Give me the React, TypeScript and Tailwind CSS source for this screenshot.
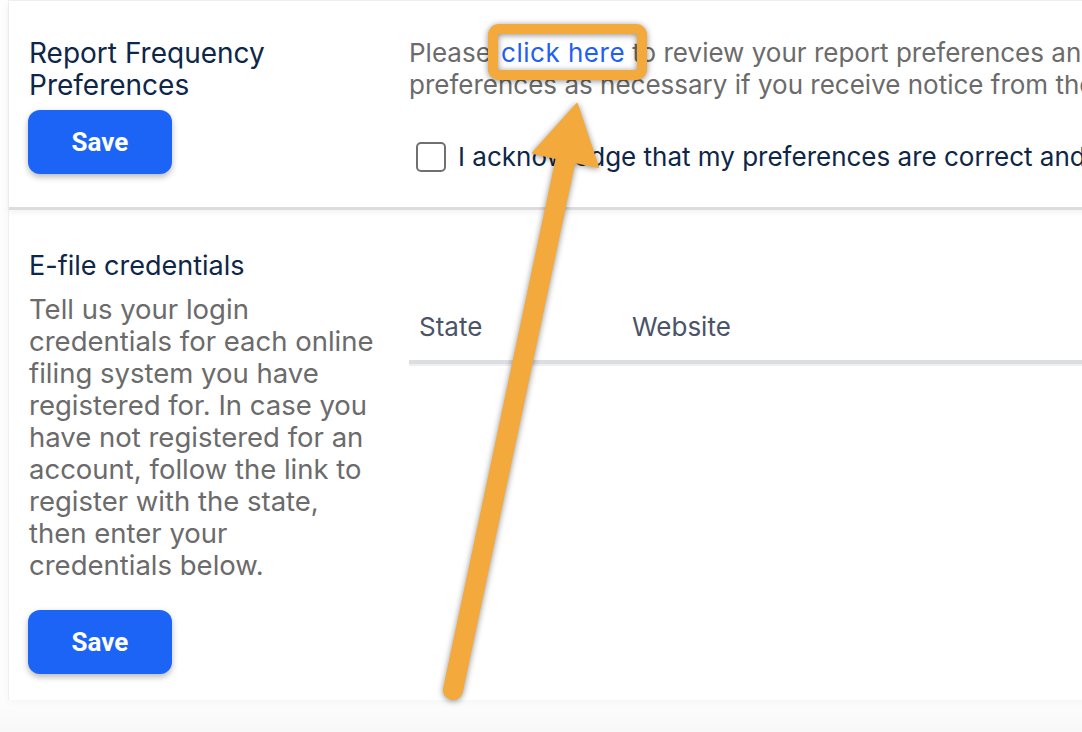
import React from "react";

function SaveButton() {
  return (
    <button className="-ml-px flex h-[64px] w-[144px] items-center justify-center rounded-[12px] bg-[#1c64f6] font-['Roboto'] text-[26px] font-bold text-white shadow-[0_3px_6px_rgba(0,0,0,0.28)]">
      Save
    </button>
  );
}

const descLines = [
  "Tell us your login",
  "credentials for each online",
  "filing system you have",
  "registered for. In case you",
  "have not registered for an",
  "account, follow the link to",
  "register with the state,",
  "then enter your",
  "credentials below.",
];

export default function App() {
  return (
    <div className="relative h-[732px] w-[1082px] overflow-hidden bg-[linear-gradient(to_bottom,#fdfdfd_0px,#fdfdfd_700px,#f8f8f8_732px)] font-['Inter',sans-serif]">
      <div className="ml-2 w-[1200px] border-l border-t border-[#f0f0f0] bg-white shadow-[0_3px_8px_rgba(0,0,0,0.03)]">
        {/* Report frequency */}
        <section className="flex border-b-[3px] border-[#dcdcdc] pb-[33px] pt-[36px] shadow-[0_3px_6px_rgba(0,0,0,0.05)]">
          <div className="w-[400px] shrink-0 pl-[20px]">
            <h2 className="w-[350px] text-[28px] leading-[32px] text-[#0e2647]">
              Report Frequency Preferences
            </h2>
            <div className="mt-[9px]">
              <SaveButton />
            </div>
          </div>
          <div className="flex-1">
            <p className="whitespace-nowrap text-[26px] leading-[32px] text-[#6b6b6b]">
              Please <a className="ml-[3px] tracking-[0.5px] text-[#1f5ff5]">click here</a> to review your report preferences and update
              <br />
              preferences as necessary if you receive notice from the state.
            </p>
            <label className="ml-[7px] mt-[40px] flex items-center gap-[12px] whitespace-nowrap">
              <span className="h-[30px] w-[30px] shrink-0 rounded-[5px] border-2 border-[#707070] bg-white" />
              <span className="text-[26px] leading-[32px] text-[#0e2647]">
                I acknowledge that my preferences are correct and up to date
              </span>
            </label>
          </div>
        </section>

        {/* E-file credentials */}
        <section className="flex pb-[26px]">
          <div className="w-[400px] shrink-0 pl-[20px] pt-[40px]">
            <h2 className="text-[27px] leading-[32px] text-[#0e2647]">E-file credentials</h2>
            <p className="mt-[11px] whitespace-nowrap text-[27.5px] leading-[32px] text-[#6b6b6b]">
              {descLines.map((line) => (
                <span key={line} className="block">
                  {line}
                </span>
              ))}
            </p>
            <div className="mt-[29px]">
              <SaveButton />
            </div>
          </div>
          <div className="flex-1 pt-[101px]">
            <div className="flex border-b-4 border-[#dcdee2] pb-[17px] text-[26px] leading-[32px] text-[#4b5369] shadow-[0_2px_0_#eeeff1]">
              <div className="w-[213px] px-[10px]">State</div>
              <div className="px-[10px]">Website</div>
            </div>
          </div>
        </section>
      </div>

      {/* annotation */}
      <svg
        className="pointer-events-none absolute left-0 top-0"
        width="1082"
        height="732"
        viewBox="0 0 1082 732"
        style={{ filter: "drop-shadow(0 1px 3px rgba(0,0,0,0.45))" }}
      >
        <rect x="493" y="29" width="149" height="46" rx="6" fill="none" stroke="#f3a93c" strokeWidth="10" />
        <line x1="453" y1="690" x2="566" y2="158" stroke="#f3a93c" strokeWidth="20" strokeLinecap="round" />
        <polygon points="577,104 533,153 598,167" fill="#f3a93c" strokeLinejoin="round" stroke="#f3a93c" strokeWidth="2" />
      </svg>
    </div>
  );
}
